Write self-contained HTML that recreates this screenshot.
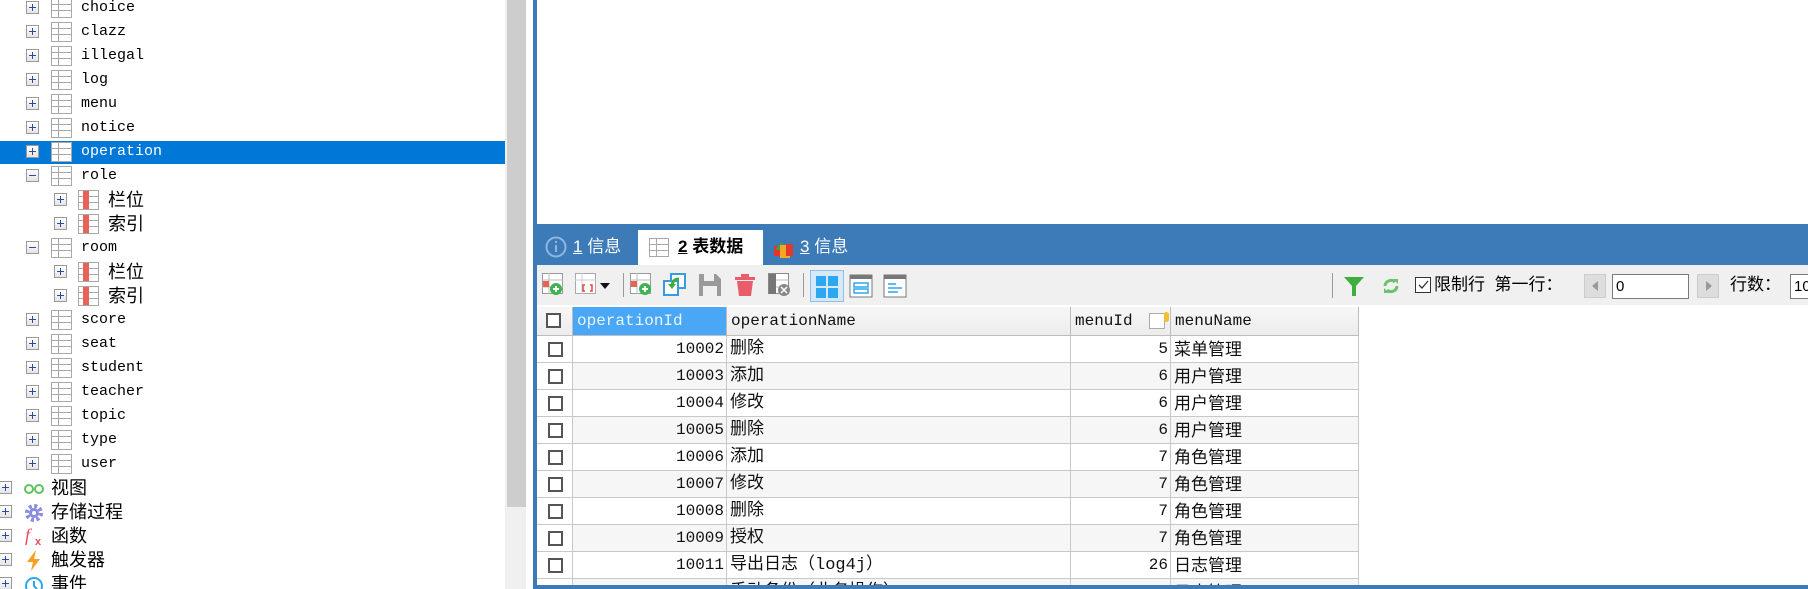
<!DOCTYPE html>
<html style="width:1808px;height:589px;overflow:hidden"><head><meta charset="utf-8"><style>
*{margin:0;padding:0;box-sizing:border-box}
body{width:1808px;height:589px;overflow:hidden;background:#fff;position:relative;font-family:"Liberation Mono","Noto Sans CJK SC",monospace}
.a{position:absolute}
.tr{position:absolute;height:24px;line-height:24px;font-size:15px;color:#000;white-space:nowrap}
.ex{position:absolute;width:13px;height:13px;border:1px solid #9a9a9a;background:linear-gradient(#fff,#e4e4e4);top:5px}
.ex:before{content:"";position:absolute;left:2px;top:5px;width:7px;height:1px;background:#2d4c9b}
.ex.p:after{content:"";position:absolute;left:5px;top:2px;width:1px;height:7px;background:#2d4c9b}
.ti{position:absolute;top:2px;width:21px;height:20px;border:1px solid #a8a8a8;background:
linear-gradient(#a8a8a8,#a8a8a8) 0 5px/100% 1px no-repeat,
linear-gradient(#a8a8a8,#a8a8a8) 0 11px/100% 1px no-repeat,
linear-gradient(#a8a8a8,#a8a8a8) 6px 0/1px 100% no-repeat,#fff}
.ci{position:absolute;top:2px;width:21px;height:20px;border:1px solid #a8a8a8;background:
linear-gradient(#e8625a,#e8625a) 4px 0/6px 100% no-repeat,
linear-gradient(#a8a8a8,#a8a8a8) 0 5px/100% 1px no-repeat,
linear-gradient(#a8a8a8,#a8a8a8) 0 11px/100% 1px no-repeat,#fff}
.cjk{font-family:"Liberation Sans","Noto Sans CJK SC",sans-serif;font-size:17px}
.g{position:absolute;height:27px;line-height:27px;font-size:16px;border-right:1px solid #c8c8c8;border-bottom:1px solid #c8c8c8;white-space:nowrap;overflow:hidden;color:#111}
.cb{position:absolute;left:11px;top:6px;width:15px;height:15px;border:2px solid #555;background:#fff}
.ic{position:absolute;top:273px}
#tree{position:absolute;left:0;top:0;width:505px;height:589px;overflow:hidden}
#grid{position:absolute;left:0;top:0;width:1808px;height:585px;overflow:hidden}
</style></head><body>
<div class="a" style="left:0;top:141px;width:505px;height:23px;background:#0078d7"></div>
<div id="tree"></div>
<div class="a" style="left:505px;top:0;width:21px;height:589px;background:#f0f0f0"></div>
<div class="a" style="left:507px;top:0;width:19px;height:507px;background:#cdcdcd"></div>
<div class="a" style="left:533px;top:0;width:4px;height:589px;background:#3c7bb8"></div>
<div class="a" style="left:533px;top:224px;width:1275px;height:41px;background:#3c7bb8"></div>
<div class="a" style="left:537px;top:265px;width:1271px;height:40px;background:#f0f0f0"></div>
<svg class="a" style="left:545px;top:236px" width="22" height="22"><circle cx="11" cy="11" r="9.5" fill="none" stroke="#8fb6e0" stroke-width="2"/><rect x="10" y="9" width="2" height="7" fill="#8fb6e0"/><rect x="10" y="5" width="2" height="2" fill="#8fb6e0"/></svg>
<div class="a cjk" style="left:573px;top:235px;color:#fff;line-height:24px"><u>1</u> 信息</div>
<div class="a" style="left:638px;top:230px;width:125px;height:35px;background:#fff"></div>
<div class="ti" style="left:649px;top:238px;width:20px;height:19px"></div>
<div class="a cjk" style="left:678px;top:235px;color:#000;font-weight:bold;line-height:24px"><u>2</u> 表数据</div>
<svg class="a" style="left:773px;top:238px" width="22" height="22"><rect x="1" y="8" width="8" height="10" fill="#e8322a"/><path d="M8 4 L14 12 L2 12Z" fill="#3aa04a"/><rect x="7" y="7" width="10" height="13" fill="#f5a623"/><rect x="13" y="6" width="7" height="12" fill="#e03a2a"/></svg>
<div class="a cjk" style="left:800px;top:235px;color:#fff;line-height:24px"><u>3</u> 信息</div>
<svg class="ic a" style="left:542px" width="22" height="24"><rect x=".5" y=".5" width="20" height="20" fill="#fff" stroke="#999"/><path d="M0 7H21M0 14H21M7 0V21" stroke="#bbb"/><rect x="1" y="8" width="6" height="6" fill="#e8625a"/><circle cx="14" cy="16" r="6" fill="#3fb34f"/><path d="M11 16h6M14 13v6" stroke="#fff" stroke-width="2"/></svg>
<svg class="ic a" style="left:575px" width="40" height="24"><rect x=".5" y=".5" width="20" height="20" fill="#fff" stroke="#aaa"/><path d="M0 7H21M7 0V21" stroke="#ccc"/><path d="M10 12h-2v6h2M15 12h2v6h-2" stroke="#e8433a" fill="none" stroke-width="1.5"/><path d="M25 10h10l-5 6z" fill="#111"/></svg>
<div class="a" style="left:623px;top:273px;width:1px;height:24px;background:#999"></div>
<svg class="ic a" style="left:630px" width="24" height="24"><rect x=".5" y=".5" width="20" height="20" fill="#fff" stroke="#999"/><path d="M0 7H21M7 0V21" stroke="#bbb"/><rect x="1" y="8" width="6" height="6" fill="#e8625a"/><circle cx="15" cy="16" r="6" fill="#3fb34f"/><path d="M12 16h6M15 13v6" stroke="#fff" stroke-width="2"/></svg>
<svg class="ic a" style="left:663px" width="24" height="24"><rect x="8" y="1" width="14" height="14" fill="#fff" stroke="#3a9be0" stroke-width="2"/><rect x="1" y="8" width="14" height="14" fill="#fff" stroke="#3a9be0" stroke-width="2"/><path d="M16 6 Q9 6 9 14" stroke="#3fae3f" stroke-width="3" fill="none"/><path d="M5 11h8l-4 5z" fill="#3fae3f"/></svg>
<svg class="ic a" style="left:698px" width="24" height="24"><path d="M1 1h17l5 5v17H1z" fill="#9a9a9a"/><rect x="6" y="1" width="10" height="7" fill="#f0f0f0"/><rect x="5" y="13" width="14" height="10" fill="#f0f0f0"/></svg>
<svg class="ic a" style="left:733px" width="24" height="24"><path d="M2 4h20v3H2zM8 1h8v3H8z" fill="#e95c6a"/><path d="M4 8h16l-2 15H6z" fill="#e95c6a"/></svg>
<svg class="ic a" style="left:768px" width="24" height="24"><rect x=".5" y=".5" width="20" height="20" fill="#fff" stroke="#888"/><rect x="1" y="1" width="7" height="20" fill="#777"/><path d="M8 7H21M8 14H21" stroke="#bbb"/><circle cx="16" cy="17" r="6" fill="#888"/><path d="M13 14l6 6M19 14l-6 6" stroke="#fff" stroke-width="1.5"/></svg>
<div class="a" style="left:803px;top:273px;width:1px;height:24px;background:#999"></div>
<div class="a" style="left:810px;top:270px;width:34px;height:32px;background:#d5e8f8;border:1px solid #8fbfe8"></div>
<svg class="ic a" style="left:815px;top:275px" width="24" height="24"><rect x="1" y="1" width="10" height="10" fill="#2ba8f0"/><rect x="13" y="1" width="10" height="10" fill="#2ba8f0"/><rect x="1" y="13" width="10" height="10" fill="#2ba8f0"/><rect x="13" y="13" width="10" height="10" fill="#2ba8f0"/></svg>
<svg class="ic a" style="left:849px;top:274px" width="24" height="24"><rect x="1" y="1" width="22" height="22" fill="#fff" stroke="#777"/><rect x="1" y="1" width="22" height="4" fill="#777"/><rect x="5" y="9" width="14" height="4" fill="none" stroke="#2ba8f0" stroke-width="1.5"/><rect x="5" y="15" width="14" height="4" fill="none" stroke="#2ba8f0" stroke-width="1.5"/></svg>
<svg class="ic a" style="left:883px;top:274px" width="24" height="24"><rect x="1" y="1" width="22" height="22" fill="#fff" stroke="#777"/><rect x="1" y="1" width="22" height="4" fill="#777"/><path d="M5 10h8M5 14h14M5 18h10" stroke="#2ba8f0" stroke-width="1.5"/></svg>
<div class="a" style="left:1332px;top:273px;width:1px;height:25px;background:#999"></div>
<svg class="ic a" style="left:1343px;top:275px" width="22" height="22"><path d="M1 2h20l-8 9v10h-4V11z" fill="#3fae3f"/></svg>
<svg class="ic a" style="left:1381px;top:276px" width="20" height="20"><path d="M4 10a6 6 0 0 1 10-4" stroke="#6cc36c" stroke-width="3" fill="none"/><path d="M16 10a6 6 0 0 1-10 4" stroke="#6cc36c" stroke-width="3" fill="none"/><path d="M12 3h5v5z" fill="#6cc36c"/><path d="M8 17H3v-5z" fill="#6cc36c"/></svg>
<div class="a" style="left:1415px;top:277px;width:16px;height:16px;border:1px solid #333;background:#fff"></div>
<svg class="a" style="left:1417px;top:279px" width="13" height="13"><path d="M2 6l3 3 6-7" stroke="#333" fill="none" stroke-width="1.3"/></svg>
<div class="a cjk" style="left:1434px;top:273px;line-height:24px;color:#000">限制行&nbsp;&nbsp;第一行：</div>
<div class="a" style="left:1584px;top:274px;width:22px;height:24px;background:#ddd;border:1px solid #ccc"></div>
<svg class="a" style="left:1590px;top:280px" width="10" height="12"><path d="M8 1L2 6l6 5z" fill="#999"/></svg>
<div class="a" style="left:1612px;top:274px;width:77px;height:25px;border:1px solid #7a7a7a;background:#fff;font-family:'Liberation Sans',sans-serif;font-size:15px;line-height:23px;padding-left:3px">0</div>
<div class="a" style="left:1697px;top:274px;width:22px;height:24px;background:#ddd;border:1px solid #ccc"></div>
<svg class="a" style="left:1704px;top:280px" width="10" height="12"><path d="M2 1l6 5-6 5z" fill="#999"/></svg>
<div class="a cjk" style="left:1730px;top:273px;line-height:24px">行数：</div>
<div class="a" style="left:1790px;top:274px;width:40px;height:25px;border:1px solid #7a7a7a;background:#fff;font-family:'Liberation Sans',sans-serif;font-size:15px;line-height:23px;padding-left:3px">10</div>
<div class="a" style="left:537px;top:305px;width:1271px;height:280px;background:#fff"></div>
<div id="grid"></div>
<script>
var t=[["choice",1],["clazz",1],["illegal",1],["log",1],["menu",1],["notice",1],["operation",1],["role",1,0],["栏位",2],["索引",2],["room",1,0],["栏位",2],["索引",2],["score",1],["seat",1],["student",1],["teacher",1],["topic",1],["type",1],["user",1],["视图",0,"v"],["存储过程",0,"p"],["函数",0,"f"],["触发器",0,"t"],["事件",0,"e"]];
var h="";
t.forEach(function(r,i){var y=i*24-4,l=r[1],nm=r[0];
var ex=l==0?5:l==1?32:60;var ic=l==0?23:l==1?51:78;var tx=l==0?51:l==1?81:108;
var col=i==6?"#fff":"#000";
h+='<div class="tr" style="top:'+y+'px;left:0;width:505px">';
h+='<div class="ex'+(r[2]===0?'':' p')+'" style="left:'+(ex-6)+'px"></div>';
if(l==1)h+='<div class="ti" style="left:'+ic+'px"></div>';
else if(l==2)h+='<div class="ci" style="left:'+ic+'px"></div>';
else{var s={v:'<svg width="22" height="22"><circle cx="6" cy="12" r="4" fill="none" stroke="#5cc45c" stroke-width="2"/><circle cx="16" cy="12" r="4" fill="none" stroke="#5cc45c" stroke-width="2"/></svg>',
p:'<svg width="22" height="22"><circle cx="11" cy="12" r="7" fill="none" stroke="#8a8ae0" stroke-width="4" stroke-dasharray="3 2.5"/><circle cx="11" cy="12" r="5" fill="#8a8ae0"/><circle cx="11" cy="12" r="2" fill="#fff"/></svg>',
f:'<svg width="22" height="22"><text x="2" y="16" font-family="Liberation Serif" font-style="italic" font-size="18" fill="#e84a5f">f</text><text x="12" y="20" font-family="Liberation Sans" font-size="11" font-weight="bold" fill="#e84a5f">x</text></svg>',
t:'<svg width="22" height="22"><path d="M13 1L4 13h6l-2 9 9-12h-6z" fill="#f5a020"/></svg>',
e:'<svg width="22" height="22"><circle cx="11" cy="13" r="8" fill="none" stroke="#2ba8f0" stroke-width="2"/><path d="M11 8v5l3 3" stroke="#2ba8f0" stroke-width="2" fill="none"/></svg>'}[r[2]];
h+='<div class="a" style="left:'+ic+'px;top:1px">'+s+'</div>';}
var cjk=/[^\x00-\x7f]/.test(nm);
h+='<div class="a'+(cjk?' cjk':'')+'" style="left:'+tx+'px;top:0;color:'+col+(cjk?';font-size:18px':'')+'">'+nm+'</div></div>';});
document.getElementById('tree').innerHTML=h;
var cols=[[537,36],[573,154],[727,344],[1071,100],[1171,188]];
var rows=[["10002","删除","5","菜单管理"],["10003","添加","6","用户管理"],["10004","修改","6","用户管理"],["10005","删除","6","用户管理"],["10006","添加","7","角色管理"],["10007","修改","7","角色管理"],["10008","删除","7","角色管理"],["10009","授权","7","角色管理"],["10011","导出日志（log4j）","26","日志管理"],["10012","手动备份（业务操作）","26","日志管理"]];
var g="";var hd=["","operationId","operationName","menuId","menuName"];
cols.forEach(function(c,j){var bg=j==1?"#4aa7f5":"linear-gradient(#f7f7f7,#ececec)";
g+='<div class="g" style="left:'+c[0]+'px;top:307px;width:'+c[1]+'px;height:29px;line-height:29px;background:'+bg+';color:'+(j==1?'#e8f4ff':'#111')+';padding-left:4px;border-color:#bdbdbd">'+(j==0?'<div class="cb" style="left:9px;top:6px"></div>':hd[j])+(j==3?'<span style="position:absolute;left:78px;top:6px;width:16px;height:16px;border:1px solid #aaa;background:#fff"></span><span style="position:absolute;left:93px;top:5px;width:5px;height:10px;background:#f0c030;border-radius:3px"></span>':'')+'</div>';});
rows.forEach(function(r,i){var y=336+i*27,bg=i%2?"#f6f6f6":"#fff";
cols.forEach(function(c,j){var s='left:'+c[0]+'px;top:'+y+'px;width:'+c[1]+'px;background:'+(j==0?'#fff':bg)+';';var ct="";
if(j==0)ct='<div class="cb"></div>';
else if(j==1||j==3){s+='text-align:right;padding-right:2px;';ct=r[j-1];}
else {s+='padding-left:3px;';ct='<span class="cjk" style="font-size:17px">'+r[j-1]+'</span>';}
if(j==2)ct='<span style="font-family:\'Liberation Mono\',\'Noto Sans CJK SC\',monospace;font-size:17px">'+r[1]+'</span>';
g+='<div class="g" style="'+s+'">'+ct+'</div>';});});
document.getElementById('grid').innerHTML=g;
</script>
<div class="a" style="left:533px;top:585px;width:1275px;height:4px;background:#3c7bb8"></div>
</body></html>
